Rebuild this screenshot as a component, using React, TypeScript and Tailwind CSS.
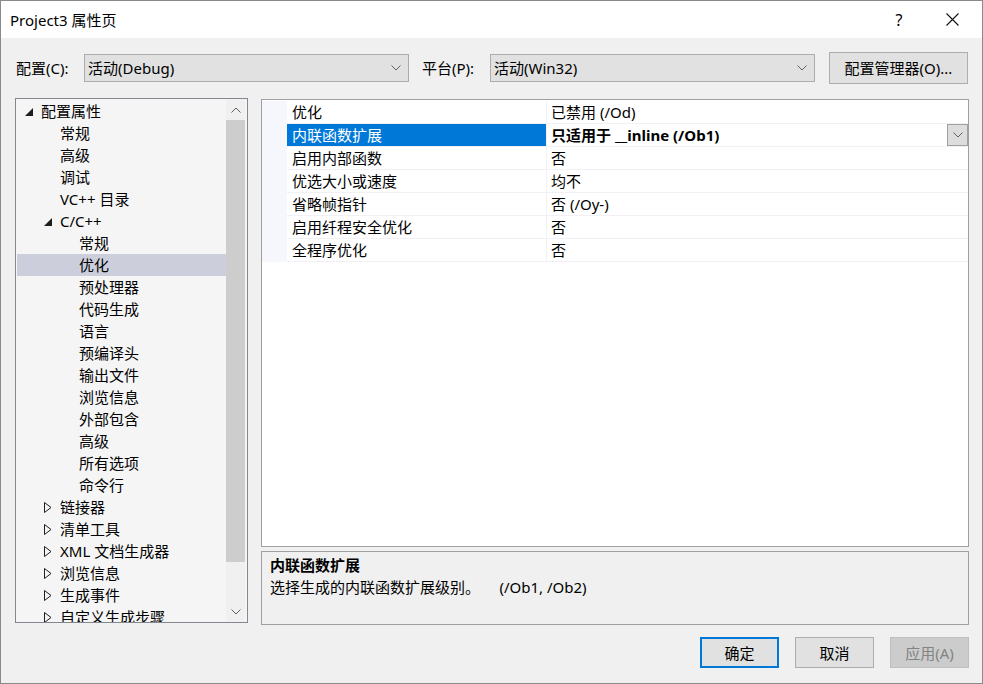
import { ReactNode } from "react";

type TreeItem = { label: string; level: number; arrow?: "open" | "closed"; selected?: boolean };

const treeItems: TreeItem[] = [
  { label: "配置属性", level: 0, arrow: "open" },
  { label: "常规", level: 1 },
  { label: "高级", level: 1 },
  { label: "调试", level: 1 },
  { label: "VC++ 目录", level: 1 },
  { label: "C/C++", level: 1, arrow: "open" },
  { label: "常规", level: 2 },
  { label: "优化", level: 2, selected: true },
  { label: "预处理器", level: 2 },
  { label: "代码生成", level: 2 },
  { label: "语言", level: 2 },
  { label: "预编译头", level: 2 },
  { label: "输出文件", level: 2 },
  { label: "浏览信息", level: 2 },
  { label: "外部包含", level: 2 },
  { label: "高级", level: 2 },
  { label: "所有选项", level: 2 },
  { label: "命令行", level: 2 },
  { label: "链接器", level: 1, arrow: "closed" },
  { label: "清单工具", level: 1, arrow: "closed" },
  { label: "XML 文档生成器", level: 1, arrow: "closed" },
  { label: "浏览信息", level: 1, arrow: "closed" },
  { label: "生成事件", level: 1, arrow: "closed" },
  { label: "自定义生成步骤", level: 1, arrow: "closed" },
];

const props = [
  { name: "优化", value: "已禁用 (/Od)" },
  { name: "内联函数扩展", value: "只适用于 __inline (/Ob1)", selected: true },
  { name: "启用内部函数", value: "否" },
  { name: "优选大小或速度", value: "均不" },
  { name: "省略帧指针", value: "否 (/Oy-)" },
  { name: "启用纤程安全优化", value: "否" },
  { name: "全程序优化", value: "否" },
];

function Chevron({ up = false }: { up?: boolean }) {
  return (
    <svg width="10" height="6" viewBox="0 0 10 6" className={up ? "rotate-180" : ""}>
      <path d="M0.5 0.5 L5 5 L9.5 0.5" fill="none" stroke="#606060" strokeWidth="1" />
    </svg>
  );
}

function Combo({ text, width }: { text: string; width: string }) {
  return (
    <div
      className={`${width} h-[28px] bg-[#e1e1e1] border border-[#adadad] flex items-center justify-between pl-[3px] pr-[7px]`}
    >
      <span>{text}</span>
      <Chevron />
    </div>
  );
}

function Arrow({ kind }: { kind?: "open" | "closed" }) {
  if (kind === "open")
    return (
      <svg width="8" height="8" viewBox="0 0 8 8" className="mt-[2px]">
        <path d="M8 0 L8 8 L0 8 Z" fill="#1e1e1e" />
      </svg>
    );
  if (kind === "closed")
    return (
      <svg width="8" height="11" viewBox="0 0 8 11">
        <path d="M0.5 0.5 L7 5.5 L0.5 10.5 Z" fill="none" stroke="#1e1e1e" strokeWidth="1" />
      </svg>
    );
  return null;
}

function DialogButton({ children, kind }: { children: ReactNode; kind?: "default" | "disabled" }) {
  const cls =
    kind === "default"
      ? "border-2 border-[#0078d7] bg-[#e1e1e1] text-black"
      : kind === "disabled"
        ? "border border-[#bfbfbf] bg-[#cccccc] text-[#838383]"
        : "border border-[#adadad] bg-[#e1e1e1] text-black";
  return <div className={`w-[79px] h-[31px] flex items-center justify-center ${cls}`}>{children}</div>;
}

export default function App() {
  return (
    <div className="w-[983px] h-[684px] border border-[#8a8a8a] bg-[#f0f0f0] flex flex-col text-[15px] leading-[20px] text-black font-['Noto_Sans','Noto_Sans_CJK_SC',sans-serif] overflow-hidden">
      {/* title bar */}
      <div className="h-[37px] bg-white flex items-center pl-[9px]">
        <span className="flex-1">Project3 属性页</span>
        <span className="w-[20px] text-center mr-[37px] text-[16px]">?</span>
        <svg width="13" height="13" viewBox="0 0 13 13" className="mr-[23px]">
          <path d="M0.5 0.5 L12.5 12.5 M12.5 0.5 L0.5 12.5" stroke="#111" strokeWidth="1.1" />
        </svg>
      </div>

      {/* config row */}
      <div className="flex items-center pl-[15px] mt-[14px] h-[32px]">
        <span className="w-[68px]">配置(C):</span>
        <Combo text="活动(Debug)" width="w-[325px]" />
        <span className="w-[68px] ml-[13px]">平台(P):</span>
        <Combo text="活动(Win32)" width="w-[325px]" />
        <div className="ml-[14px] w-[139px] h-[32px] bg-[#e1e1e1] border border-[#adadad] flex items-center justify-center">
          配置管理器(O)...
        </div>
      </div>

      {/* main */}
      <div className="flex pl-[14px] mt-[14px] gap-[13px]">
        {/* tree */}
        <div className="w-[233px] h-[525px] border border-[#828790] bg-[#f5f5f5] flex pr-[2px]">
          <div className="flex-1 overflow-hidden pt-[1px] pl-[1px]">
            {treeItems.map((item, i) => (
              <div
                key={i}
                className={`h-[22px] flex items-center whitespace-nowrap ${item.selected ? "bg-[#cccedb]" : ""}`}
                style={{ paddingLeft: 8 + item.level * 19 }}
              >
                <div className="w-[16px] flex items-center">
                  <Arrow kind={item.arrow} />
                </div>
                <span>{item.label}</span>
              </div>
            ))}
          </div>
          <div className="w-[19px] bg-[#f0f0f0] flex flex-col">
            <div className="h-[21px] flex items-center justify-center">
              <Chevron up />
            </div>
            <div className="h-[442px] bg-[#cdcdcd]" />
            <div className="flex-1" />
            <div className="h-[21px] flex items-center justify-center">
              <Chevron />
            </div>
          </div>
        </div>

        {/* right column */}
        <div className="w-[708px] flex flex-col gap-[4px] mt-[1px]">
          <div className="h-[448px] border border-[#a0a0a0] bg-white pt-[1px]">
            {props.map((p, i) => (
              <div key={i} className="h-[23px] flex">
                <div className="w-[25px] bg-[#f5f7fc]" />
                <div
                  className={`w-[259px] pl-[5px] flex items-center border-b border-[#f0f0f5] ${
                    p.selected ? "bg-[#0078d7] text-white border-[#0078d7]" : ""
                  }`}
                >
                  {p.name}
                </div>
                <div className="w-[1px] bg-[#f0f0f5]" />
                <div
                  className={`flex-1 pl-[4px] flex items-center justify-between border-b border-[#f0f0f5] ${
                    p.selected ? "font-bold" : ""
                  }`}
                >
                  <span>{p.value}</span>
                  {p.selected && (
                    <div className="w-[21px] h-[22px] bg-[#dddddd] border border-[#a0a0a0] flex items-center justify-center self-start">
                      <Chevron />
                    </div>
                  )}
                </div>
              </div>
            ))}
          </div>
          <div className="h-[74px] border border-[#a0a0a0] bg-[#f0f0f0] pl-[8px] pt-[2px]">
            <div className="h-[22px] flex items-center font-bold">内联函数扩展</div>
            <div className="h-[22px] flex items-center whitespace-pre">
              选择生成的内联函数扩展级别。     (/Ob1, /Ob2)
            </div>
          </div>
        </div>
      </div>

      {/* buttons */}
      <div className="flex justify-end pr-[13px] mt-[12px] gap-[16px]">
        <DialogButton kind="default">确定</DialogButton>
        <DialogButton>取消</DialogButton>
        <DialogButton kind="disabled">应用(A)</DialogButton>
      </div>
    </div>
  );
}
